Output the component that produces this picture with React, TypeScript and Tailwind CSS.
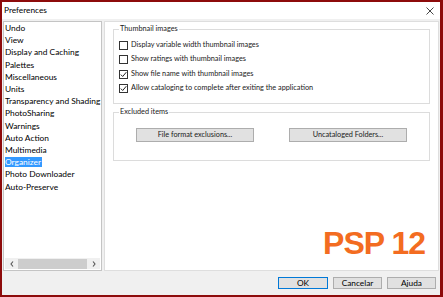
import React from "react";

const items = [
  "Undo",
  "View",
  "Display and Caching",
  "Palettes",
  "Miscellaneous",
  "Units",
  "Transparency and Shading",
  "PhotoSharing",
  "Warnings",
  "Auto Action",
  "Multimedia",
  "Organizer",
  "Photo Downloader",
  "Auto-Preserve",
];

function Check({ checked }: { checked: boolean }) {
  return (
    <span className="w-[9px] h-[9px] border border-[#333] bg-white flex items-center justify-center shrink-0">
      {checked && (
        <svg width="7" height="7" viewBox="0 0 7 7">
          <path d="M0.8 3.6 L2.7 5.5 L6.3 1.2" fill="none" stroke="#222" strokeWidth="1" />
        </svg>
      )}
    </span>
  );
}

export default function App() {
  const checks = [
    ["Display variable width thumbnail images", false],
    ["Show ratings with thumbnail images", false],
    ["Show file name with thumbnail images", true],
    ["Allow cataloging to complete after exiting the application", true],
  ] as const;
  return (
    <div
      className="w-[443px] h-[297px] bg-[#8d0b0b] pl-[2px] pt-[2px] pr-[3px] pb-[2px] overflow-hidden"
      style={{ fontFamily: "Lato, 'Liberation Sans', sans-serif" }}
    >
      <div className="w-full h-full bg-[#f0f0f0] flex flex-col">
        {/* title bar */}
        <div className="h-[17px] bg-white flex items-center justify-between pl-[2px] pr-[6px] shrink-0">
          <span className="text-[8.3px] text-black">Preferences</span>
          <svg width="8" height="8" viewBox="0 0 8 8">
            <path d="M0.5 0.5 L7.5 7.5 M7.5 0.5 L0.5 7.5" stroke="#333" strokeWidth="0.9" />
          </svg>
        </div>
        <div className="flex-1 flex gap-[2px] pl-[1px] pr-[1px] pt-[2px] min-h-0">
          {/* list */}
          <div className="w-[99px] h-[250px] bg-white border border-[#c4c4c4] flex flex-col overflow-hidden">
            <div className="flex-1 flex flex-col pl-[1px] text-[8.4px] leading-[12.2px] text-black">
              {items.map((it) => (
                <div key={it} className="whitespace-nowrap">
                  {it === "Organizer" ? (
                    <span className="bg-[#3399ff] text-white pr-[1px]">{it}</span>
                  ) : (
                    it
                  )}
                </div>
              ))}
            </div>
            <div className="h-[11px] mb-[1px] flex items-center bg-[#f0f0f0] mx-[1px]">
              <span className="w-[13px] flex justify-center">
                <svg width="4" height="6" viewBox="0 0 4 6">
                  <path d="M3 0.5 L1 3 L3 5.5" fill="none" stroke="#555" strokeWidth="1.1" />
                </svg>
              </span>
              <span className="flex-1 h-[10px] bg-[#cdcdcd]" />
              <span className="w-[13px] flex justify-center">
                <svg width="4" height="6" viewBox="0 0 4 6">
                  <path d="M1 0.5 L3 3 L1 5.5" fill="none" stroke="#555" strokeWidth="1.1" />
                </svg>
              </span>
            </div>
          </div>
          {/* right panel */}
          <div className="flex-1 h-[250px] bg-white border border-[#dedede] flex flex-col pl-[8px] pr-[8px] pt-[7px] text-[#1a1a1a]">
            <div className="relative border border-[#dcdcdc] h-[75px] pl-[5px] pt-[10.5px] flex flex-col gap-[5px]">
              <span className="absolute -top-[6px] left-[5px] bg-white px-[1px] text-[7.3px] leading-[10px]">
                Thumbnail images
              </span>
              {checks.map(([label, c]) => (
                <div key={label} className="flex items-center gap-[3px] h-[9.5px] text-[7.3px] whitespace-nowrap">
                  <Check checked={c} />
                  <span>{label}</span>
                </div>
              ))}
            </div>
            <div className="relative border border-[#dcdcdc] h-[49px] mt-[8px] flex justify-center items-start pt-[15px] gap-[35px]">
              <span className="absolute -top-[6px] left-[5px] bg-white px-[1px] text-[7.3px] leading-[10px]">
                Excluded items
              </span>
              <div className="w-[118px] h-[14px] bg-[#e1e1e1] border border-[#adadad] flex items-center justify-center text-[7.3px]">
                File format exclusions...
              </div>
              <div className="w-[118px] h-[14px] bg-[#e1e1e1] border border-[#adadad] flex items-center justify-center text-[7.3px]">
                Uncataloged Folders...
              </div>
            </div>
            <div
              className="mt-auto mb-[11px] self-end mr-[5px] text-[32px] tracking-[-1px] font-bold text-[#f36c21] leading-none"
              style={{ fontFamily: "'Liberation Sans', Arial, sans-serif" }}
            >
              PSP 12
            </div>
          </div>
        </div>
        {/* bottom bar */}
        <div className="h-[24px] shrink-0 flex items-center justify-end gap-[5px] pr-[4px] text-[8.3px] text-black">
          <div className="w-[50px] h-[12px] bg-[#e1e1e1] border border-[#0078d7] flex items-center justify-center">OK</div>
          <div className="w-[49px] h-[12px] bg-[#e1e1e1] border border-[#adadad] flex items-center justify-center">Cancelar</div>
          <div className="w-[49px] h-[12px] bg-[#e1e1e1] border border-[#adadad] flex items-center justify-center">Ajuda</div>
        </div>
      </div>
    </div>
  );
}
